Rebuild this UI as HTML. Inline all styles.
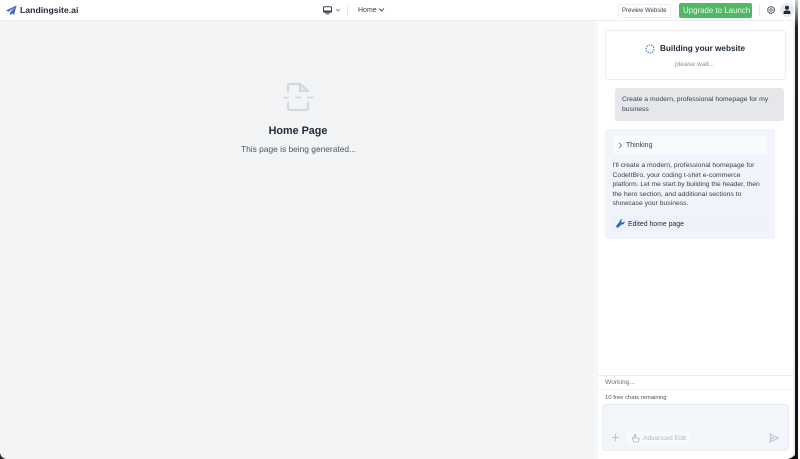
<!DOCTYPE html>
<html><head><meta charset="utf-8">
<style>
html,body{margin:0;padding:0;width:800px;height:459px;overflow:hidden;background:#fff;font-family:"Liberation Sans",sans-serif;color:#1f2937}
div,span,svg{position:absolute;white-space:nowrap}
.t{line-height:1}
</style></head><body>
<div style="left:0;top:21px;width:598px;height:438px;background:#f3f4f6"></div>
<div style="left:0;top:20px;width:794px;height:1px;background:#eceef1"></div>
<div style="left:598px;top:21px;width:196px;height:438px;background:#fff"></div>
<div style="left:594px;top:21px;width:4px;height:438px;background:#f5f6f8"></div>

<svg style="left:6px;top:5px" width="11" height="11" viewBox="0 0 13 13"><path d="M12.500.5 0 6.500l3 1.600L10 3 4.600 9v3.400L7 10l2.600 1.500z" fill="#4a6fa8"/></svg>
<div class="t" style="left:20px;top:5.500px;font-size:8.700px;font-weight:700;color:#1f2937">Landingsite.ai</div>

<svg style="left:323px;top:6px" width="9" height="9" viewBox="0 0 9 9"><rect x=".5" y=".8" width="8" height="5.400" rx=".8" fill="#fff" stroke="#374151"/><rect x=".5" y="4.500" width="8" height="1.700" fill="#374151"/><rect x="2.500" y="7.300" width="4" height="1" fill="#374151"/></svg>
<svg style="left:335px;top:8px" width="6" height="5" viewBox="0 0 6 5"><path d="M1 1l2 2 2-2" fill="none" stroke="#8b919c"/></svg>
<div style="left:347px;top:5px;width:1px;height:11px;background:#e5e7eb"></div>
<div class="t" style="left:358px;top:6.500px;font-size:7px;color:#374151">Home</div>
<svg style="left:378px;top:7px" width="7" height="6" viewBox="0 0 7 6"><path d="M1 1.500l2.500 2.500L6 1.500" fill="none" stroke="#4b5563"/></svg>

<div style="left:618px;top:4px;width:51px;height:12px;border:1px solid #eceef1;border-radius:2px;background:#fff"></div>
<div class="t" style="left:622px;top:7.500px;font-size:6px;color:#374151;font-weight:400">Preview Website</div>
<div style="left:679px;top:3px;width:73px;height:15px;border-radius:2px;background:#4fb863"></div>
<div class="t" style="left:683px;top:6.500px;font-size:7.900px;color:#e9f8ec">Upgrade to Launch</div>
<div style="left:759px;top:5px;width:1px;height:11px;background:#e5e7eb"></div>
<svg style="left:766px;top:5px" width="10" height="10" viewBox="0 0 10 10"><circle cx="5" cy="5" r="3.300" fill="none" stroke="#4b5563" stroke-width="1.300" stroke-dasharray="1.600 .5"/><circle cx="5" cy="5" r="1.200" fill="none" stroke="#4b5563" stroke-width=".8"/></svg>
<div style="left:780px;top:3px;width:14px;height:14px;border-radius:50%;background:#e8eaee"></div>
<svg style="left:783px;top:5px" width="8" height="10" viewBox="0 0 8 10"><circle cx="4" cy="2.700" r="2" fill="#1f2937"/><path d="M.6 9V7.200C.6 6 1.800 5.500 4 5.500s3.400.5 3.400 1.700V9z" fill="#1f2937"/></svg>

<!-- centre -->
<svg style="left:282px;top:82px" width="33" height="30" viewBox="0 0 33 30"><path d="M6 10V4a2 2 0 0 1 2-2h10l8 7v1M26 20v6a2 2 0 0 1-2 2H8a2 2 0 0 1-2-2v-6M18 2v7h8" fill="none" stroke="#d4d7dc" stroke-width="2.200"/><path d="M1 15.500h6M13 15.500h6M25 15.500h7" stroke="#d4d7dc" stroke-width="1.600"/></svg>
<div class="t" style="left:198px;width:200px;top:126px;text-align:center;font-size:10.800px;font-weight:700;color:#1f2937">Home Page</div>
<div class="t" style="left:198.500px;width:200px;top:145px;text-align:center;font-size:8.400px;color:#4b5563">This page is being generated...</div>

<!-- building card -->
<div style="left:605px;top:30px;width:179px;height:48px;border:1px solid #eceef1;border-radius:3px;background:#fff"></div>
<svg style="left:645px;top:44px" width="10" height="10" viewBox="0 0 10 10"><circle cx="5" cy="5" r="4" fill="none" stroke="#3f63c4" stroke-width="1.100" stroke-dasharray="1.300 1.200"/></svg>
<div class="t" style="left:660px;top:45px;font-size:8.200px;font-weight:700;color:#1f2937">Building your website</div>
<div class="t" style="left:675px;top:61.500px;font-size:6.800px;color:#8b919c">please wait...</div>

<div style="left:615px;top:88px;width:169px;height:33px;border-radius:3px;background:#e5e7eb"></div>
<div class="t" style="left:622px;top:97px;font-size:6.800px;color:#374151">Create a modern, professional homepage for my</div>
<div class="t" style="left:622px;top:107px;font-size:6.800px;color:#374151">business</div>

<div style="left:605px;top:129px;width:170px;height:110px;border-radius:3px;background:#f1f4fa"></div>
<div style="left:613px;top:136px;width:154px;height:18px;border-radius:2px;background:#f9fafc"></div>
<svg style="left:618px;top:142px" width="5" height="7" viewBox="0 0 5 7"><path d="M1 .8l2.500 2.700L1 6.200" fill="none" stroke="#6b7280" stroke-width=".8"/></svg>
<div class="t" style="left:626px;top:141.500px;font-size:7px;color:#374151">Thinking</div>
<div class="t" style="left:612.500px;top:163px;font-size:6.800px;color:#374151">I'll create a modern, professional homepage for</div>
<div class="t" style="left:612.500px;top:173px;font-size:6.800px;color:#374151">CodeItBro, your coding t-shirt e-commerce</div>
<div class="t" style="left:612.500px;top:182px;font-size:6.700px;color:#374151">platform. Let me start by building the header, then</div>
<div class="t" style="left:612.500px;top:192px;font-size:6.800px;color:#374151">the hero section, and additional sections to</div>
<div class="t" style="left:612.500px;top:201px;font-size:6.800px;color:#374151">showcase your business.</div>
<div style="left:611px;top:214px;width:157px;height:18px;border-radius:2px;background:#eef2fb"></div>
<svg style="left:616px;top:219px" width="9" height="9" viewBox="0 0 9 9"><path d="M8.500 2.200 6.800 3.700 5.400 3.300 5 1.900 6.500.4C5 0 3.400 1 3.500 3L.6 6.400a1.300 1.300 0 0 0 1.900 1.800L5.700 5.400C7.700 5.700 9 4 8.500 2.200z" fill="#2f62c8"/></svg>
<div class="t" style="left:628px;top:222px;font-size:6.900px;font-weight:400;color:#1f2937">Edited home page</div>

<!-- bottom -->
<div style="left:598px;top:375px;width:196px;height:1px;background:#eceef1"></div>
<div class="t" style="left:605px;top:379.500px;font-size:6.700px;color:#6b7280">Working...</div>
<div style="left:598px;top:389px;width:196px;height:1px;background:#f1f2f4"></div>
<div class="t" style="left:605px;top:396px;font-size:5.900px;color:#4b5563">10 free chats remaining</div>
<div style="left:602px;top:404px;width:185px;height:45px;border:1px solid #e8ebf1;border-radius:4px;background:#f2f5fa"></div>
<svg style="left:611px;top:433px" width="9" height="9" viewBox="0 0 9 9"><path d="M4.500 1v7M1 4.500h7" stroke="#c0c5cd" stroke-width="1"/></svg>
<div style="left:627px;top:431px;width:63px;height:14px;border-radius:3px;background:#f8f9fb"></div>
<svg style="left:631px;top:433px" width="9" height="10" viewBox="0 0 9 10"><path d="M3.500 1.500v4L2 4.500 1.200 5.300 3 9h4.500L8.200 5.500 4.800 4.500v-3z" fill="none" stroke="#b0b5bd" stroke-width=".8"/></svg>
<div class="t" style="left:643px;top:436px;font-size:6.700px;color:#b3b7bf">Advanced Edit</div>
<svg style="left:769px;top:433px" width="10" height="10" viewBox="0 0 10 10"><path d="M.8 1 9.200 5 .8 9l.9-3.400L5 5 1.700 4.400z" fill="none" stroke="#b6bbc3" stroke-width=".9"/></svg>

<!-- window frame -->
<div style="left:793px;top:21px;width:2px;height:438px;background:#eceef1"></div>
<div style="left:795px;top:0;width:3px;height:459px;background:linear-gradient(#cfcfcf,#222 6%,#111)"></div>
<div style="left:798px;top:0;width:2px;height:459px;background:#fff"></div>
<svg style="left:0;top:451px" width="8" height="8" viewBox="0 0 8 8"><path d="M0 2Q1 7 6 8H0z" fill="#222"/></svg>
<svg style="left:785px;top:449px" width="13" height="10" viewBox="0 0 13 10"><path d="M13 0Q12 7 3 10H13z" fill="#111"/></svg>
</body></html>
